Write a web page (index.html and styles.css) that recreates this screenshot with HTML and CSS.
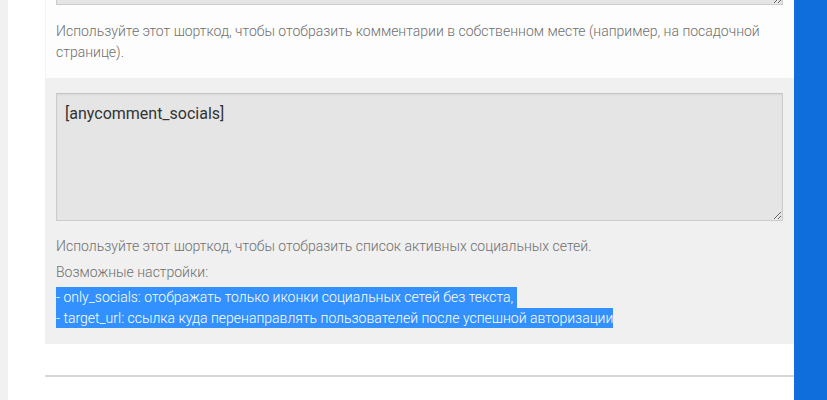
FILE: index.html
```html
<!DOCTYPE html>
<html lang="ru">
<head>
<meta charset="utf-8">
<link rel="stylesheet" href="styles.css">
</head>
<body>
<div class="strip"></div>
<main class="main">
  <section class="card card-top">
    <textarea class="code code-top" readonly>[anycomment]</textarea>
    <p class="desc">Используйте этот шорткод, чтобы отобразить комментарии в собственном месте (например, на посадочной странице).</p>
  </section>
  <section class="card card-gray">
    <textarea class="code code-main" readonly>[anycomment_socials]</textarea>
    <p class="desc first">Используйте этот шорткод, чтобы отобразить список активных социальных сетей.</p>
    <p class="desc">Возможные настройки:</p>
    <p class="desc sel"><span class="hl">- only_socials: отображать только иконки социальных сетей без текста,&nbsp;</span><br><span class="hl">- target_url: ссылка куда перенаправлять пользователей после успешной авторизации</span></p>
  </section>
  <hr class="divider">
</main>
<aside class="side"></aside>
</body>
</html>
```
FILE: styles.css
```css
html, body {
  margin: 0;
  padding: 0;
  height: 400px;
  overflow: hidden;
  background: #ffffff;
  font-family: Roboto, "Liberation Sans", sans-serif;
}
body {
  display: flex;
}
.strip {
  width: 8px;
  flex: none;
  background: #f1f1f1;
}
.main {
  flex: 1;
  padding-left: 37px;
  display: flex;
  flex-direction: column;
}
.side {
  width: 33px;
  flex: none;
  background: #0f6edb;
}
.card {
  padding: 0 11px;
}
.card-top {
  background: #fdfdfd;
  border-left: 1px solid #f3f3f3;
  padding-left: 10px;
  padding-bottom: 15px;
}
.card-gray {
  background: #f0f0f0;
  padding-top: 15px;
  padding-bottom: 16px;
}
.code {
  display: block;
  box-sizing: border-box;
  width: 100%;
  margin: 0;
  background: #e5e5e5;
  border: 1px solid #cccccc;
  border-top-color: #c4c4c4;
  box-shadow: inset 0 1px 2px rgba(0,0,0,0.05);
  font-family: Roboto, "Liberation Sans", sans-serif;
  font-size: 16px;
  line-height: 20px;
  color: #333333;
  padding: 10px 8px;
  outline: none;
}
.code-top {
  height: 60px;
  margin-top: -55px;
  color: transparent;
}
.code-main {
  height: 128px;
}
.desc {
  margin: 0;
  font-size: 14px;
  font-weight: 300;
  line-height: 21px;
  color: #6f6f6f;
}
.card-top .desc {
  margin-top: 16px;
}
.desc.first {
  margin-top: 15px;
  margin-bottom: 5px;
  line-height: 21px;
}
.desc.sel {
  margin-top: 4px;
  line-height: 20.5px;
}
.hl {
  display: inline-block;
  line-height: 20.5px;
  background: #3390ff;
  color: #ffffff;
}
.divider {
  margin: 31px 0 0 0;
  border: 0;
  height: 2px;
  background: #d6d6d6;
}
```
